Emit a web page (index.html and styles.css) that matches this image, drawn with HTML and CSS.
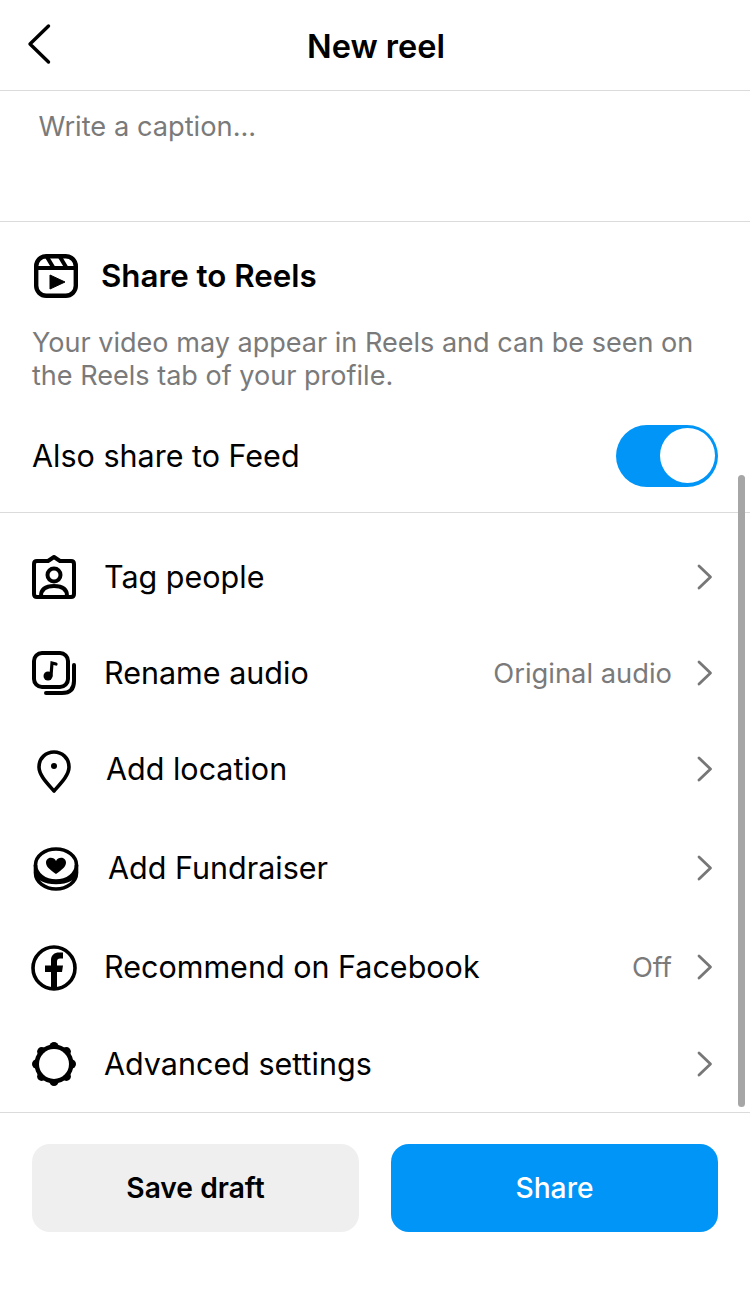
FILE: index.html
```html
<!DOCTYPE html>
<html lang="en">
<head>
<meta charset="utf-8">
<title>New reel</title>
<link rel="stylesheet" href="styles.css">
</head>
<body>
<div class="page">
  <header class="top">
    <svg class="back" viewBox="0 0 24 42" width="24" height="42"><path d="M21.5 3 L3 21 L21.5 39" fill="none" stroke="#000" stroke-width="3.4" stroke-linecap="round" stroke-linejoin="round"/></svg>
    <h1 class="title">New reel</h1>
  </header>
  <section class="caption">Write a caption...</section>
  <section class="share">
    <div class="share-head">
      <svg class="reels" viewBox="0 0 44 44" width="44" height="44"><rect x="2.200" y="2.200" width="39.600" height="39.600" rx="10" fill="none" stroke="#000" stroke-width="4.400"/><path d="M3 14H41" stroke="#000" stroke-width="4"/><path d="M13 3L19 13M26 3L32 13" stroke="#000" stroke-width="4"/><path d="M16 21L31 28L16 35Z" fill="#000" stroke="#000" stroke-width="1" stroke-linejoin="round"/></svg>
      <h2 class="share-title">Share to Reels</h2>
    </div>
    <p class="share-text">Your video may appear in Reels and can be seen on the Reels tab of your profile.</p>
    <div class="feed">
      <span class="feed-label">Also share to Feed</span>
      <span class="toggle"><span class="knob"></span></span>
    </div>
  </section>
  <ul class="rows">
    <li class="row row-1">
      <svg class="icon" viewBox="0 0 44 44" width="44" height="44"><path d="M5 6H16L22 2L28 6H39Q42 6 42 9V39Q42 42 39 42H5Q2 42 2 39V9Q2 6 5 6Z" fill="none" stroke="#000" stroke-width="4" stroke-linejoin="round"/><circle cx="22" cy="20" r="6.500" fill="none" stroke="#000" stroke-width="4"/><path d="M9 41C9 33 15 31 22 31C29 31 35 33 35 41" fill="none" stroke="#000" stroke-width="4"/></svg>
      <span class="label">Tag people</span>
      <svg class="chev" viewBox="0 0 16 26" width="16" height="26"><path d="M2 2L13.500 13L2 24" fill="none" stroke="#777" stroke-width="2.800" stroke-linecap="round" stroke-linejoin="round"/></svg>
    </li>
    <li class="row row-1">
      <svg class="icon" viewBox="0 0 44 44" width="44" height="44"><rect x="2" y="2" width="34" height="34" rx="8" fill="none" stroke="#000" stroke-width="4"/><path d="M42 14V30Q42 42 30 42H14" fill="none" stroke="#000" stroke-width="4" stroke-linecap="round"/><circle cx="16" cy="25" r="4.500" fill="#000"/><path d="M19 25L20 12L24 13" fill="none" stroke="#000" stroke-width="3.200" stroke-linecap="round"/></svg>
      <span class="label">Rename audio</span>
      <span class="value">Original audio</span>
      <svg class="chev" viewBox="0 0 16 26" width="16" height="26"><path d="M2 2L13.500 13L2 24" fill="none" stroke="#777" stroke-width="2.800" stroke-linecap="round" stroke-linejoin="round"/></svg>
    </li>
    <li class="row row-1">
      <svg class="icon icon-pin" viewBox="0 0 44 44" width="44" height="44"><path d="M22 41C15 33 7 25 7 17C7 8 14 2 22 2C30 2 37 8 37 17C37 25 29 33 22 41Z" fill="none" stroke="#000" stroke-width="3.600" stroke-linejoin="round"/><circle cx="22" cy="16" r="3" fill="#000"/></svg>
      <span class="label">Add location</span>
      <svg class="chev" viewBox="0 0 16 26" width="16" height="26"><path d="M2 2L13.500 13L2 24" fill="none" stroke="#777" stroke-width="2.800" stroke-linecap="round" stroke-linejoin="round"/></svg>
    </li>
    <li class="row row-2">
      <svg class="icon icon-fund" viewBox="0 0 46 44" width="46" height="44"><ellipse cx="23" cy="18" rx="20.500" ry="16" fill="none" stroke="#000" stroke-width="3.600"/><path d="M2.500 18V26C2.500 35 12 42 23 42C34 42 43.500 35 43.500 26V18" fill="none" stroke="#000" stroke-width="3.600"/><path d="M2.500 25C5 32 13 35.500 23 35.500C33 35.500 41 32 43.500 25" fill="none" stroke="#000" stroke-width="3.600"/><path d="M23 27C17 22.500 13 20 13 15.500C13 12.500 15.500 10.800 17.800 10.800C20 10.800 22 12 23 14C24 12 26 10.800 28.200 10.800C30.500 10.800 33 12.500 33 15.500C33 20 29 22.500 23 27Z" fill="#000"/></svg>
      <span class="label">Add Fundraiser</span>
      <svg class="chev" viewBox="0 0 16 26" width="16" height="26"><path d="M2 2L13.500 13L2 24" fill="none" stroke="#777" stroke-width="2.800" stroke-linecap="round" stroke-linejoin="round"/></svg>
    </li>
    <li class="row row-1">
      <svg class="icon icon-fb" viewBox="0 0 46 46" width="46" height="46"><circle cx="23" cy="23" r="21" fill="none" stroke="#000" stroke-width="3.600"/><path d="M20 44V27H14V20.500H20V15C20 10 23.500 7.500 28 7.500H32V13.500H29C27 13.500 26 14.500 26 16.500V20.500H32L31 27H26V44Z" fill="#000"/></svg>
      <span class="label">Recommend on Facebook</span>
      <span class="value">Off</span>
      <svg class="chev" viewBox="0 0 16 26" width="16" height="26"><path d="M2 2L13.500 13L2 24" fill="none" stroke="#777" stroke-width="2.800" stroke-linecap="round" stroke-linejoin="round"/></svg>
    </li>
    <li class="row row-3">
      <svg class="icon" viewBox="0 0 44 44" width="44" height="44"><g fill="#000"><circle cx="22" cy="22" r="19.500"/><circle cx="22" cy="4.500" r="4.500"/><circle cx="22" cy="39.500" r="4.500"/><circle cx="4.500" cy="22" r="4.500"/><circle cx="39.500" cy="22" r="4.500"/><circle cx="9.600" cy="9.600" r="4.500"/><circle cx="34.400" cy="9.600" r="4.500"/><circle cx="9.600" cy="34.400" r="4.500"/><circle cx="34.400" cy="34.400" r="4.500"/></g><circle cx="22" cy="22" r="15" fill="#fff"/></svg>
      <span class="label">Advanced settings</span>
      <svg class="chev" viewBox="0 0 16 26" width="16" height="26"><path d="M2 2L13.500 13L2 24" fill="none" stroke="#777" stroke-width="2.800" stroke-linecap="round" stroke-linejoin="round"/></svg>
    </li>
  </ul>
  <footer class="actions">
    <button class="btn btn-draft">Save draft</button>
    <button class="btn btn-share">Share</button>
  </footer>
  <div class="scrollbar"></div>
</div>
</body>
</html>
```

FILE: styles.css
```css
* { box-sizing: border-box; }
html, body { margin: 0; padding: 0; background: #fff; }
body { font-family: Inter, "Liberation Sans", sans-serif; color: #000; }
.page { position: relative; width: 750px; height: 1296px; overflow: hidden; }
.top { position: relative; height: 91px; border-bottom: 1px solid #dbdbdb; display: flex; align-items: center; justify-content: center; }
.back { position: absolute; left: 27px; top: 23px; }
.title { margin: 2px 0 0 2px; font-size: 32.500px; font-weight: 600; }
.caption { height: 131px; padding: 18px 38.500px 0; border-bottom: 1px solid #dbdbdb; font-size: 27.250px; line-height: 36px; color: #7a7a7a; }
.share { height: 291px; padding: 0 32px; border-bottom: 1px solid #dbdbdb; }
.share-head { display: flex; align-items: center; gap: 23px; padding: 32px 0 0 2px; height: 76px; }
.reels { flex: none; }
.share-title { margin: 0; font-size: 31.300px; font-weight: 600; }
.share-text { margin: 28px 0 0; font-size: 27.050px; line-height: 33px; color: #7a7a7a; }
.feed { display: flex; align-items: center; justify-content: space-between; margin-top: 33px; }
.feed-label { font-size: 30.500px; margin-bottom: 2px; }
.toggle { width: 102px; height: 62px; border-radius: 31px; background: #0095f6; position: relative; display: block; }
.knob { position: absolute; right: 3px; top: 3px; width: 55px; height: 55px; border-radius: 50%; background: #fff; }
.rows { list-style: none; margin: 0; padding: 15px 0 0; height: 600px; border-bottom: 1px solid #dbdbdb; }
.row { display: flex; align-items: center; height: 96px; padding: 0 37px 0 32px; }
.row-2 { height: 102px; }
.row-3 { height: 98px; }
.icon { flex: none; margin: 2px 28px 0 0; }
.icon-pin { margin: 8px 30px 0 0; }
.icon-fund { margin: 4px 29px 0 1px; }
.icon-fb { margin: 4px 27px 0 -1px; }
.label { font-size: 30.500px; flex: 1; }
.value { font-size: 27.350px; color: #7a7a7a; margin: 2px 25px 0 0; }
.chev { flex: none; margin-top: 2px; }
.actions { display: flex; gap: 32px; padding: 31px 32px 0; }
.btn { flex: 1; height: 88px; border: 0; border-radius: 18px; font-family: inherit; font-size: 28.200px; }
.btn-draft { background: #efefef; color: #000; font-weight: 600; }
.btn-share { background: #0095f6; color: #fff; font-weight: 500; }
.scrollbar { position: absolute; left: 738px; top: 475px; width: 7px; height: 632px; border-radius: 4px; background: #a6a6a6; }
```
